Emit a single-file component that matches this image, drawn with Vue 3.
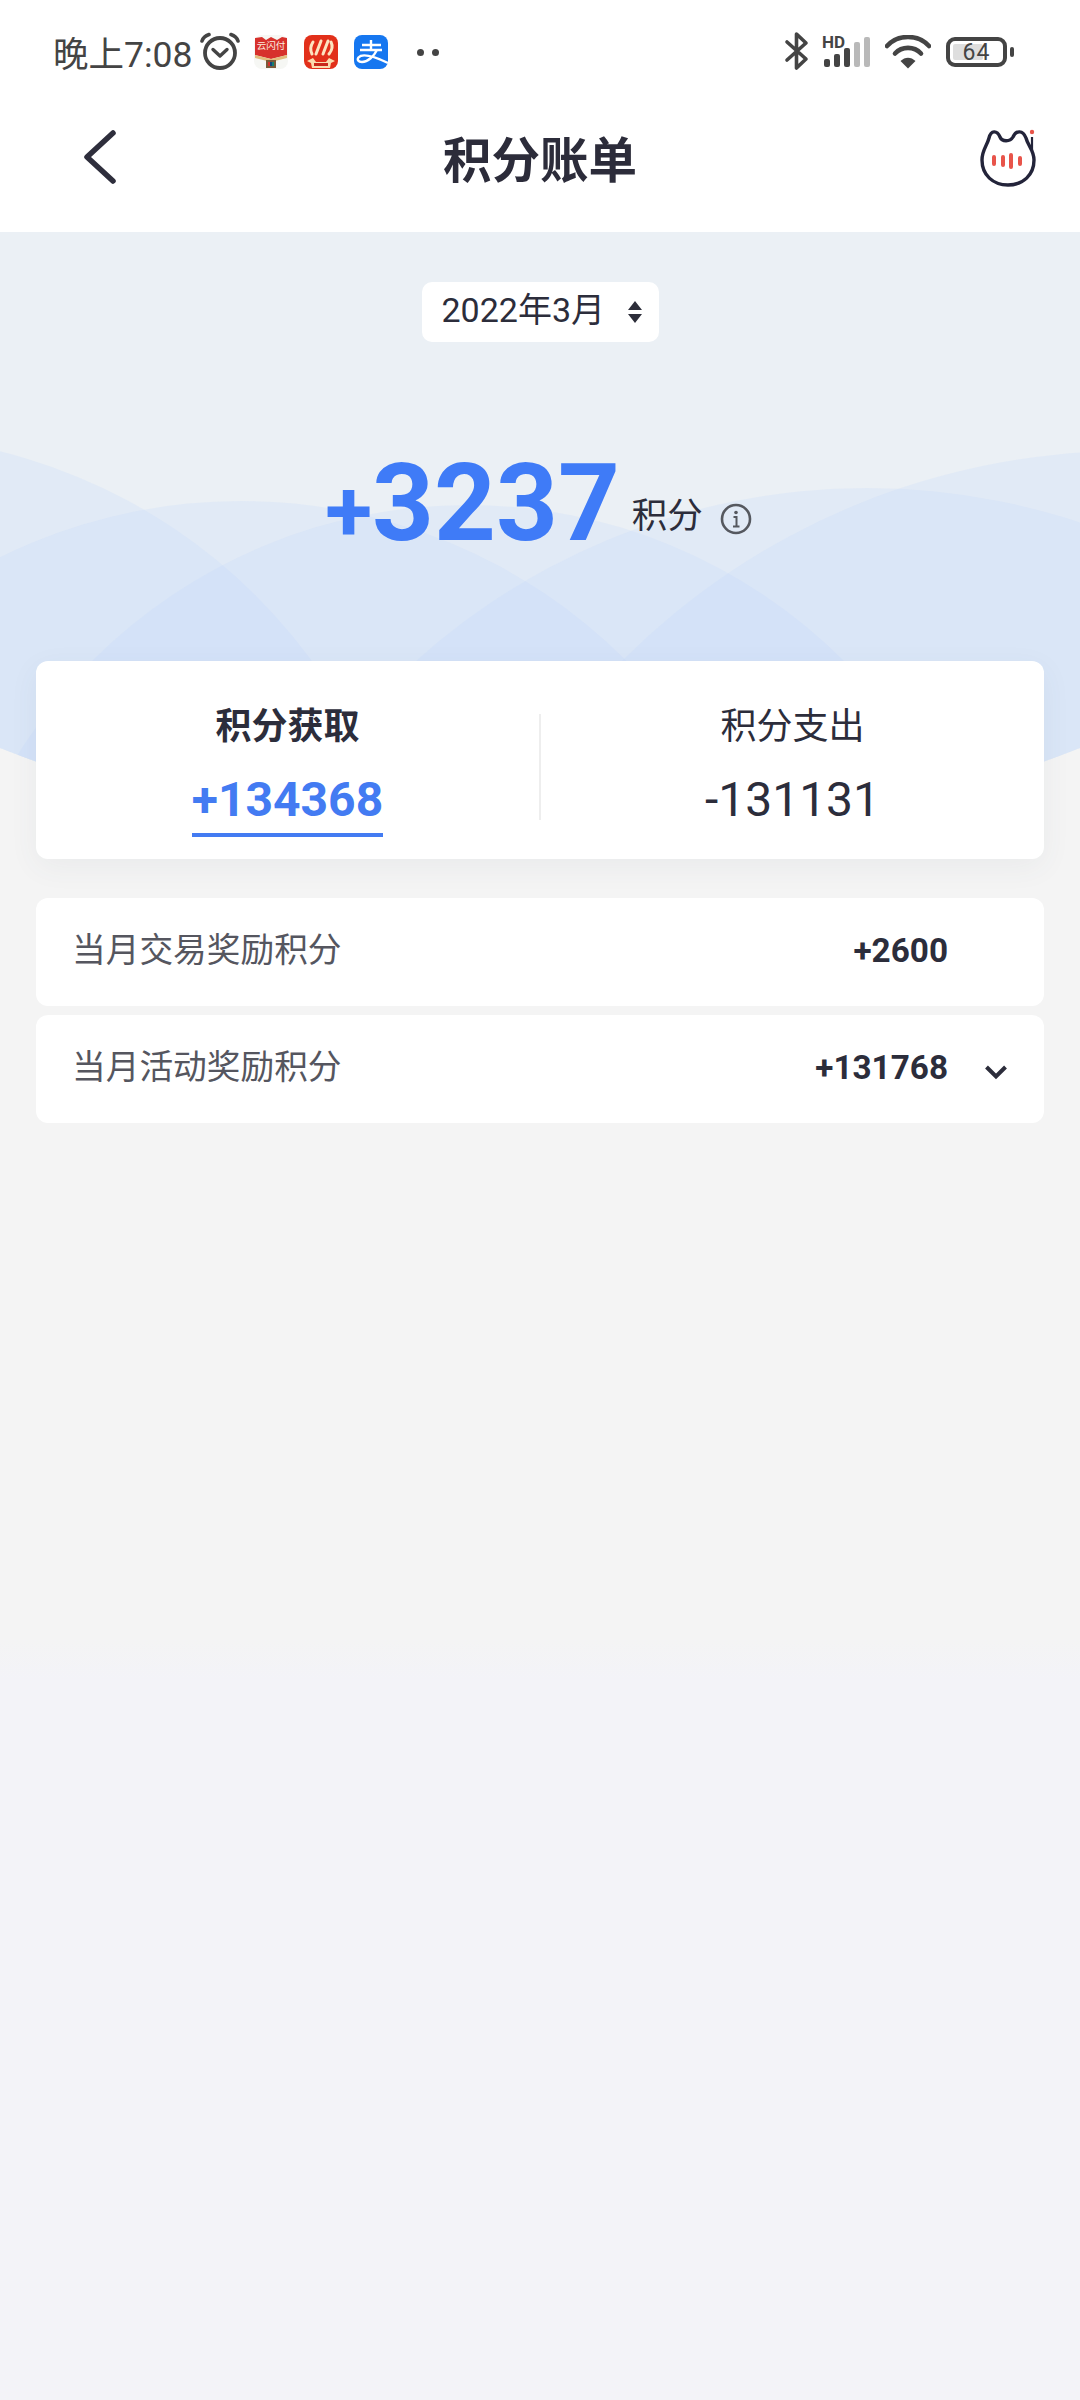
<template>
  <div class="page">
    <div class="status-bar">
      <span class="time">晚上7:08</span>
      <svg class="alarm" viewBox="0 0 40 38" width="40" height="38">
        <circle cx="20" cy="21" r="15" fill="none" stroke="#444" stroke-width="3.8" />
        <path d="M13 15.500 20 22 27 15.500" transform="translate(0 2)" fill="none" stroke="#444" stroke-width="3.400" stroke-linecap="round" stroke-linejoin="round" />
        <path d="M2 9C3 6 6 3.500 9 2.500M38 9C37 6 34 3.500 31 2.500" fill="none" stroke="#444" stroke-width="3.600" stroke-linecap="round" />
      </svg>
      <svg class="app-icon" viewBox="0 0 34 34" width="34" height="34">
        <rect width="34" height="34" rx="8" fill="#f6f7f4" />
        <path d="M1 3 8 2 12 5 17 2 23 5 28 2 33 3V20L17 24 1 20Z" fill="#d7312c" />
        <text x="17" y="14" text-anchor="middle" fill="#fbeee0" class="tiny">云闪付</text>
        <path d="M1 20 17 24 33 20V23L17 27 1 23Z" fill="#e2bd7d" />
        <rect x="12" y="25" width="10" height="8" fill="#7b5b3a" />
        <rect x="14" y="27" width="2" height="4" fill="#d7312c" />
        <rect x="16" y="27" width="2" height="4" fill="#15457f" />
        <rect x="18" y="27" width="2" height="4" fill="#14806f" />
      </svg>
      <svg class="app-icon" viewBox="0 0 34 34" width="34" height="34">
        <rect width="34" height="34" rx="8" fill="#e2301a" />
        <path d="M9 7Q5 13 8 19M17 6 12 19M24 6 19 19M27 7Q30 13 25 19" fill="none" stroke="#fde4c0" stroke-width="3" stroke-linecap="round" />
        <path d="M3 26 9 23 12 27H22L25 23 31 26 27 28 26 33H8L7 28Z" fill="#fbdcae" />
        <rect x="10" y="28" width="14" height="3" fill="#c9281a" />
      </svg>
      <svg class="app-icon" viewBox="0 0 34 34" width="34" height="34">
        <rect width="34" height="34" rx="8" fill="#1677f0" />
        <path d="M8 10H27M17 5V15M6 15H28M23 15C20 21 14 27 8 27 4 27 3 24.500 4.500 22.500 8 18.500 19 21 34 28" fill="none" stroke="#fff" stroke-width="2.400" />
      </svg>
      <span class="dots"><i></i><i></i></span>

      <span class="spacer"></span>

      <svg class="bt" viewBox="0 0 26 40" width="26" height="40">
        <path d="M3 11 22 28 12.500 37V3L22 12 3 29" fill="none" stroke="#444" stroke-width="3.600" stroke-linejoin="round" stroke-linecap="round" />
      </svg>
      <svg class="signal" viewBox="0 -6 50 40" width="50" height="40">
        <text x="0" y="13" font-size="17" font-weight="700" fill="#444" class="hd">HD</text>
        <rect x="2" y="24" width="6" height="8" rx="2" fill="#444" />
        <rect x="12" y="19" width="6" height="13" rx="2" fill="#444" />
        <rect x="22" y="13" width="6" height="19" rx="2" fill="#444" />
        <rect x="32" y="7" width="6" height="25" rx="2" fill="#b9b9b9" />
        <rect x="42" y="2" width="6" height="30" rx="2" fill="#b9b9b9" />
      </svg>
      <svg class="wifi" viewBox="0 0 46 34" width="46" height="34">
        <path d="M2 11C13 -1 33 -1 44 11" fill="none" stroke="#444" stroke-width="4.600" stroke-linecap="round" />
        <path d="M10 18.500C17 11 29 11 36 18.500" fill="none" stroke="#444" stroke-width="4.600" stroke-linecap="round" />
        <path d="M15.500 26C20 21.500 26 21.500 30.500 26L23 33.500Z" fill="#444" />
      </svg>
      <div class="battery">
        <span class="battery-level"></span>
        <span class="battery-text">64</span>
      </div>
      <span class="battery-nub"></span>
    </div>

    <div class="nav">
      <svg class="back" viewBox="0 0 36 60" width="36" height="60">
        <path d="M31 5 5 29 31 53" fill="none" stroke="#2e2e3c" stroke-width="5.500" stroke-linecap="round" stroke-linejoin="round" />
      </svg>
      <span class="nav-title">积分账单</span>
      <svg class="cat" viewBox="0 0 60 60" width="60" height="60">
        <path d="M3 32C3 22 8 18 10 10 12 2 18 2 21 9 23 14 31 14 34 9 37 2 44 2 47 10 49 18 55 22 55 32 55 47 44 57 29 57 14 57 3 47 3 32Z" fill="#fff" stroke="#23243a" stroke-width="3.400" />
        <path d="M53 9V23" stroke="#23243a" stroke-width="2.200" />
        <circle cx="53" cy="4" r="2.200" fill="#e8544a" />
        <path d="M15 29V36M24 29V37M32 27V39M41 30V36" stroke="#e8544a" stroke-width="4" stroke-linecap="round" />
      </svg>
    </div>

    <div class="hero">
      <svg class="waves" viewBox="0 232 1080 640" width="1080" height="640">
        <defs>
          <clipPath id="hero-clip">
            <path d="M0 232H1080V748Q540 960 0 748Z" />
          </clipPath>
        </defs>
        <g clip-path="url(#hero-clip)">
          <rect x="0" y="232" width="1080" height="640" fill="#ebf0f5" />
          <circle v-for="c in circles" :key="c.x" :cx="c.x" :cy="c.y" :r="c.r" fill="#c4d6fb" fill-opacity="0.23" />
        </g>
      </svg>

      <div class="date-pill">
        <span class="date-text">2022年3月</span>
        <svg viewBox="0 0 14 24" width="14" height="24">
          <path d="M7 1 14 10H0ZM7 23 0 14H14Z" fill="#2d2e3a" />
        </svg>
      </div>

      <div class="total">
        <span class="total-num"><span class="total-plus">+</span>3237</span>
        <span class="total-unit">积分</span>
        <svg class="info" viewBox="0 0 32 32" width="32" height="32">
          <circle cx="16" cy="16" r="14" fill="none" stroke="#55585f" stroke-width="2.600" />
          <circle cx="16" cy="9.500" r="1.800" fill="#55585f" />
          <path d="M13.500 14H16.500V23M13 23.500H19.500" fill="none" stroke="#55585f" stroke-width="2" />
        </svg>
      </div>

      <div class="summary">
        <div class="summary-col active">
          <div class="summary-label">积分获取</div>
          <div class="summary-value">+134368</div>
        </div>
        <div class="summary-col">
          <div class="summary-label">积分支出</div>
          <div class="summary-value">-131131</div>
        </div>
      </div>

      <div class="rows">
        <div v-for="row in rows" :key="row.label" class="row">
          <span class="row-label">{{ row.label }}</span>
          <span class="row-value">{{ row.value }}</span>
          <span class="row-arrow">
            <svg v-if="row.more" viewBox="0 0 24 16" width="24" height="16">
              <path d="M2.500 3 12 12.500 21.500 3" fill="none" stroke="#2c2d3b" stroke-width="4" />
            </svg>
          </span>
        </div>
      </div>
    </div>
  </div>
</template>

<script setup>
const circles = [
  { x: -133, y: 986, r: 551 },
  { x: 241, y: 1046, r: 545 },
  { x: 468, y: 1036, r: 531 },
  { x: 867, y: 1163, r: 675 },
  { x: 1128, y: 1166, r: 715 },
];

const rows = [
  { label: '当月交易奖励积分', value: '+2600', more: false },
  { label: '当月活动奖励积分', value: '+131768', more: true },
];
</script>

<style>
html,
body {
  margin: 0;
  background: #f4f4f4;
}
</style>

<style scoped>
.page {
  width: 1080px;
  height: 2400px;
  overflow: hidden;
  font-family: Roboto, "Noto Sans CJK SC", sans-serif;
  color: #2c2d3b;
  background: linear-gradient(#f4f4f4 0, #f4f4f4 1640px, #f3f3f8 1680px);
}

.status-bar {
  height: 88px;
  padding-left: 53px;
  display: flex;
  align-items: center;
  background: #fff;
  padding-top: 16px;
  box-sizing: border-box;
}

.time {
  font-size: 35.500px;
  color: #444;
  width: 146px;
  white-space: nowrap;
  margin-top: -2px;
}

.alarm {
  margin-left: 1px;
  margin-top: -2px;
}

.app-icon {
  flex: none;
}

.alarm + .app-icon {
  margin-left: 14px;
}

.app-icon + .app-icon {
  margin-left: 16px;
}

.tiny {
  font-family: "Noto Sans CJK SC", sans-serif;
  font-size: 9.500px;
}

.dots {
  display: flex;
  gap: 8px;
  margin-left: 29px;
}

.dots i {
  width: 7px;
  height: 7px;
  border-radius: 50%;
  background: #444;
}

.spacer {
  flex: 1;
}

.bt {
  margin-top: -2px;
}

.signal {
  margin-left: 12px;
  margin-top: -6px;
}

.hd {
  font-family: Roboto, sans-serif;
}

.wifi {
  margin-left: 13px;
}

.battery {
  margin-left: 15px;
  width: 61px;
  height: 30px;
  box-sizing: border-box;
  border: 4px solid #444;
  border-radius: 9px;
  position: relative;
  display: flex;
  align-items: center;
  justify-content: center;
}

.battery-level {
  position: absolute;
  left: 3px;
  top: 3px;
  bottom: 3px;
  width: 30px;
  background: #dedede;
  border-radius: 2px;
}

.battery-text {
  position: relative;
  font-size: 23px;
  color: #444;
  letter-spacing: 1px;
}

.battery-nub {
  width: 4px;
  height: 10px;
  margin-left: 3px;
  margin-right: 66px;
  border-radius: 2px;
  background: #444;
}

.nav {
  height: 144px;
  box-sizing: border-box;
  padding: 0 41px 4px 82px;
  display: flex;
  align-items: center;
  justify-content: space-between;
  background: #fff;
  position: relative;
}

.nav-title {
  position: absolute;
  left: 0;
  right: 0;
  top: 0;
  bottom: 0;
  display: flex;
  align-items: center;
  justify-content: center;
  font-size: 48.500px;
  font-weight: 700;
  color: #2c2c3a;
  margin-top: -7px;
}

.hero {
  position: relative;
  padding: 50px 36px 0;
  display: flex;
  flex-direction: column;
  align-items: center;
}

.waves {
  position: absolute;
  left: 0;
  top: 0;
}

.date-pill {
  position: relative;
  height: 60px;
  width: 237px;
  box-sizing: border-box;
  padding: 0 17px 0 20px;
  display: flex;
  align-items: center;
  justify-content: space-between;
  background: #fff;
  border-radius: 10px;
}

.date-text {
  font-size: 34px;
  margin-top: -9px;
}

.total {
  position: relative;
  margin-top: 99px;
  height: 124px;
  padding-right: 3px;
  display: flex;
  align-items: flex-start;
}

.total-num {
  font-size: 108px;
  font-weight: 700;
  line-height: 124px;
  color: #3f7bf7;
  white-space: nowrap;
}

.total-plus {
  font-size: 86px;
}

.total-unit {
  font-size: 35.500px;
  line-height: 48px;
  margin-left: 12px;
  margin-top: 51px;
}

.info {
  margin-left: 17px;
  margin-top: 62px;
}

.summary {
  position: relative;
  margin-top: 96px;
  width: 1008px;
  height: 198px;
  display: flex;
  align-items: center;
  background: #fff;
  border-radius: 12px;
  box-shadow: 0 8px 30px rgba(70, 80, 110, 0.06);
}

.summary-col {
  flex: 1;
  height: 106px;
  margin-top: 14px;
  display: flex;
  flex-direction: column;
  align-items: center;
}

.summary-col + .summary-col {
  border-left: 2px solid #eee;
}

.summary-label {
  font-size: 36px;
  line-height: 50px;
  margin-top: -12px;
}

.summary-value {
  font-size: 48px;
  line-height: 56px;
  margin-top: 20px;
}

.active .summary-label {
  font-weight: 700;
}

.active .summary-value {
  font-weight: 700;
  color: #437bf2;
  position: relative;
}

.active .summary-value::after {
  content: "";
  position: absolute;
  left: 0;
  right: 0;
  bottom: -9px;
  height: 4px;
  background: #437bf2;
}

.rows {
  position: relative;
  margin-top: 39px;
  width: 1008px;
  display: flex;
  flex-direction: column;
  gap: 9px;
}

.row {
  height: 108px;
  box-sizing: border-box;
  padding: 0 36px 6px 36px;
  display: flex;
  align-items: center;
  background: #fff;
  border-radius: 12px;
}

.row-label {
  flex: 1;
  font-size: 33.700px;
  color: #55565f;
  margin-top: -3px;
}

.row-value {
  font-size: 33.300px;
  font-weight: 700;
  margin-top: 2px;
}

.row-arrow {
  width: 60px;
  display: flex;
  justify-content: flex-end;
  margin-top: 12px;
}
</style>
